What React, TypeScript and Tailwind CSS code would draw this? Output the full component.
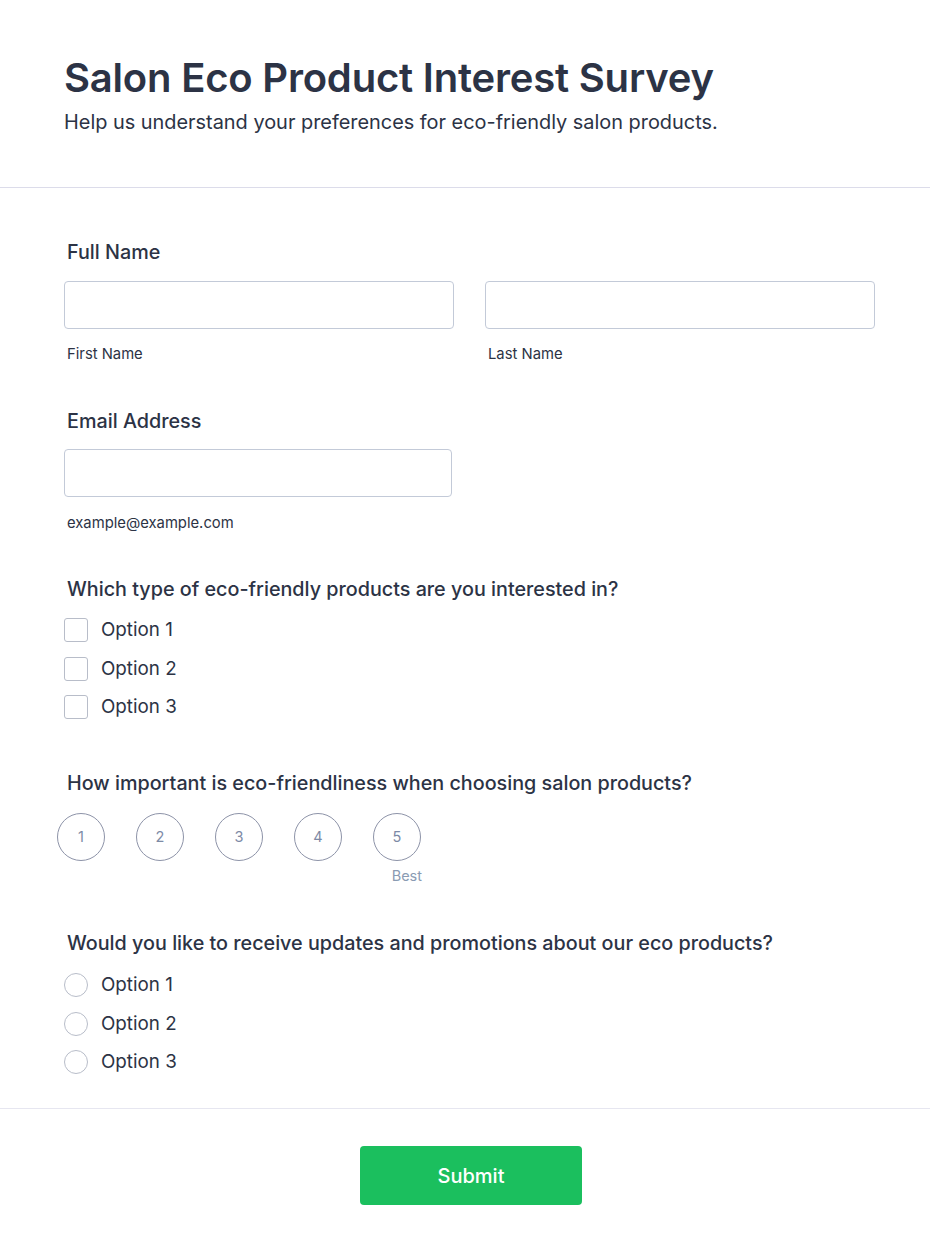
import React from "react";

const options = ["Option 1", "Option 2", "Option 3"];

function App() {
  return (
    <div className="min-h-[1255px] bg-white text-[#2c3345] font-['Inter','Liberation_Sans',sans-serif]">
      <div className="px-16 pt-[52px] pb-[52px] border-b border-[#dcdcea]">
        <h1 className="text-[40px] font-semibold leading-[52px] tracking-[-0.2px]">
          Salon Eco Product Interest Survey
        </h1>
        <p className="mt-[5px] text-[19.9px] leading-[26px]">
          Help us understand your preferences for eco-friendly salon products.
        </p>
      </div>

      <div className="px-16 pt-[52px]">
        {/* full name */}
        <div className="text-[19.75px] font-medium leading-6 pl-[3px]">Full Name</div>
        <div className="mt-[17px] grid grid-cols-2 gap-[31px] w-[811px]">
          <div>
            <div className="h-12 rounded border border-[#c3cad8]"></div>
            <div className="mt-[15px] pl-[3px] text-[14.8px] leading-5">First Name</div>
          </div>
          <div>
            <div className="h-12 rounded border border-[#c3cad8]"></div>
            <div className="mt-[15px] pl-[3px] text-[14.8px] leading-5">Last Name</div>
          </div>
        </div>

        {/* email */}
        <div className="mt-[45px] text-[19.75px] font-medium leading-6 pl-[3px]">Email Address</div>
        <div className="mt-[16px] w-[388px] h-12 rounded border border-[#c3cad8]"></div>
        <div className="mt-[16px] pl-[3px] text-[14.8px] leading-5">example@example.com</div>

        {/* checkboxes */}
        <div className="mt-[44px] text-[19.75px] font-medium leading-6 pl-[3px]">
          Which type of eco-friendly products are you interested in?
        </div>
        <div className="mt-[17px] flex flex-col gap-[14.5px]">
          {options.map((o) => (
            <div key={o} className="flex items-center gap-[13px] h-6">
              <div className="w-6 h-6 rounded-[3px] border border-[#b8bdc9]"></div>
              <span className="text-[18.8px] leading-6">{o}</span>
            </div>
          ))}
        </div>

        {/* rating */}
        <div className="mt-[52px] text-[19.75px] font-medium leading-6 pl-[3px]">
          How important is eco-friendliness when choosing salon products?
        </div>
        <div className="mt-[18px] -ml-[7px] flex gap-[31px]">
          {[1, 2, 3, 4, 5].map((n) => (
            <div key={n} className="flex flex-col items-end">
              <div className="w-12 h-12 rounded-full border border-[#8d93a8] flex items-center justify-center text-[14.5px] text-[#7d8aa6]">
                {n}
              </div>
              {n === 5 && (
                <div className="mt-[5px] -mr-[1px] text-[14.5px] leading-5 text-[#8a9bb3]">Best</div>
              )}
            </div>
          ))}
        </div>

        {/* radios */}
        <div className="mt-[45px] text-[19.75px] font-medium leading-6 pl-[3px]">
          Would you like to receive updates and promotions about our eco products?
        </div>
        <div className="mt-[18px] flex flex-col gap-[14.5px]">
          {options.map((o) => (
            <div key={o} className="flex items-center gap-[13px] h-6">
              <div className="w-6 h-6 rounded-full border border-[#b8bdc9]"></div>
              <span className="text-[18.8px] leading-6">{o}</span>
            </div>
          ))}
        </div>
      </div>

      <div className="mt-[34px] border-t border-[#e6e6f0] flex justify-center pl-3 pt-[37px] pb-12">
        <button className="w-[222px] h-[59px] rounded bg-[#1bbf5e] text-white text-[20px] font-medium">
          Submit
        </button>
      </div>
    </div>
  );
}

export default App;
